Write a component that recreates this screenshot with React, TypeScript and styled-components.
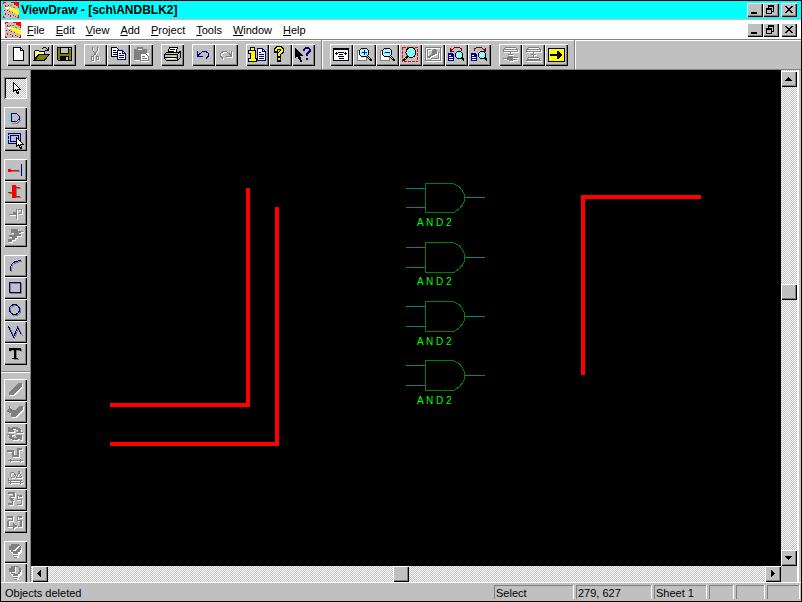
import React from "react";
import styled, { createGlobalStyle } from "styled-components";

const SILVER = "#c0c0c0";
const GRAY = "#808080";
const NAVY = "#000080";
const RED = "#ff0000";

const GlobalStyle = createGlobalStyle`
  * { box-sizing: border-box; }
  body { margin: 0; background: #000; overflow: hidden; }
  button { font: inherit; color: inherit; }
`;

const Window = styled.div`
  display: flex;
  flex-direction: column;
  height: 100vh;
  border: 1px solid #000;
  background: ${SILVER};
  color: #000;
  font: 11px/14px "Liberation Sans", Arial, sans-serif;
`;

const Bar = styled.header<{ $title?: boolean }>`
  display: flex;
  align-items: center;
  flex: none;
  height: 19px;
  padding: 0 4px 0 ${(p) => (p.$title ? 2 : 4)}px;
  background: ${(p) => (p.$title ? "#00ffff" : "#ffffff")};
  border-bottom: ${(p) => (p.$title ? `1px solid ${SILVER}` : "0")};
`;

const Title = styled.h1`
  flex: 1;
  margin: 0 0 0 2px;
  font-size: 12px;
  line-height: 16px;
  font-weight: bold;
  white-space: pre;
`;

const Menu = styled.nav`
  display: flex;
  flex: 1;
  gap: 11px;
  padding-left: 6px;
`;

const MenuItem = styled.button`
  padding: 0;
  border: 0;
  background: none;
  line-height: 16px;
`;

const WindowButtons = styled.div`
  display: flex;
`;

const Bevel = styled.button<{ $pressed?: boolean }>`
  display: block;
  flex: none;
  padding: 0;
  border: 0;
  background: ${(p) =>
    p.$pressed ? `repeating-conic-gradient(#fff 0 25%, ${SILVER} 0 50%) 0 0 / 2px 2px` : SILVER};
  box-shadow: ${(p) =>
    p.$pressed
      ? `inset 1px 1px ${GRAY}, inset -1px -1px #fff, inset 2px 2px #000`
      : `inset 1px 1px #fff, inset -1px -1px #000, inset -2px -2px ${GRAY}`};
  & > svg { display: block; }
`;

const WinButton = styled(Bevel)`
  width: 16px;
  height: 14px;
  &:last-child { margin-left: 2px; }
`;

const ToolButton = styled(Bevel)`
  width: 23px;
  height: 22px;
`;

const Toolbars = styled.div`
  display: flex;
  flex: none;
  height: 31px;
  border-top: 1px solid ${GRAY};
  border-bottom: 1px solid ${GRAY};
  box-shadow: inset 0 1px #fff;
`;

const Toolbar = styled.div`
  display: flex;
  gap: 8px;
  padding: 4px 6px 0;
  border-right: 1px solid ${GRAY};
  box-shadow: 1px 0 #fff;
  & + & { padding-left: 8px; }
`;

const Group = styled.div<{ $column?: boolean }>`
  display: flex;
  flex: none;
  flex-direction: ${(p) => (p.$column ? "column" : "row")};
`;

const Workspace = styled.main`
  display: flex;
  flex: 1;
  min-height: 0;
`;

const Sidebar = styled.aside`
  display: flex;
  flex-direction: column;
  flex: none;
  gap: 8px;
  width: 30px;
  padding: 7px 3px 0;
  border-right: 1px solid ${GRAY};
  overflow: hidden;
`;

const Divider = styled.hr`
  flex: none;
  width: 29px;
  height: 2px;
  margin: -2px -3px -2px;
  border: 0;
  border-top: 1px solid ${GRAY};
  border-bottom: 1px solid #fff;
`;

const Document = styled.section`
  display: grid;
  flex: 1;
  min-width: 0;
  grid-template: minmax(0, 1fr) 16px / minmax(0, 1fr) 16px;
  margin-right: 2px;
  border-right: 2px solid #fff;
`;

const Sheet = styled.svg`
  display: block;
  width: 100%;
  height: 100%;
  background: #000;
`;

const ScrollBar = styled.div<{ $vertical?: boolean }>`
  display: flex;
  flex-direction: ${(p) => (p.$vertical ? "column" : "row")};
  padding: ${(p) => (p.$vertical ? "1px 0 0" : "0 0 0 1px")};
  background: repeating-conic-gradient(#fff 0 25%, ${SILVER} 0 50%) 0 0 / 2px 2px;
`;

const ScrollButton = styled(Bevel)`
  width: 16px;
  height: 16px;
`;

const Track = styled.div<{ $part: number }>`
  flex: ${(p) => p.$part} 1 0;
`;

const StatusBar = styled.footer`
  display: flex;
  align-items: center;
  flex: none;
  gap: 3px;
  height: 19px;
  padding: 0 2px 0 4px;
  border-top: 1px solid #fff;
`;

const Message = styled.span`
  flex: 1;
  padding-top: 2px;
`;

const Pane = styled.span<{ $width: number }>`
  width: ${(p) => p.$width}px;
  height: 14px;
  padding-left: 1px;
  border: solid ${GRAY};
  border-width: 1px 0 0 1px;
  box-shadow: 1px 0 #fff;
`;

const Glyph = ({ w = 23, h = 22, children }: { w?: number; h?: number; children: React.ReactNode }) => (
  <svg width={w} height={h} viewBox={`0 0 ${w} ${h}`} fill="none" stroke="#000" shapeRendering="crispEdges" aria-hidden="true">
    {children}
  </svg>
);

/* Embossed look of an unavailable command: a white copy one pixel below a gray one. */
const Disabled = ({ d, solid = "" }: { d: string; solid?: string }) => (
  <Glyph>
    <g transform="translate(1 1)">
      <path d={d} stroke="#fff" />
      <path d={solid} fill="#fff" stroke="none" />
    </g>
    <path d={d} stroke={GRAY} />
    <path d={solid} fill={GRAY} stroke="none" />
  </Glyph>
);

const Logo = () => (
  <Glyph w={16} h={16}>
    <path d="M0 0H16V16H0Z" fill={SILVER} stroke="none" />
    <path d="M8 0H16V6H15V4H13V3H11V1H8ZM0 0H3V1H1V2H0ZM2 3H3V5H2ZM5 3H6V4H5ZM1 8H2V9H1ZM4 8H5V9H4ZM2 11H3V13H2ZM5 12H6V13H5ZM0 14H1V15H2V16H0ZM7 13H8V15H7ZM10 13H11V14H10ZM12 14H13V15H12ZM15 13H16V16H14V15H15ZM9 10H10V11H9ZM6 9H7V10H6Z" fill={RED} stroke="none" />
    <path d="M6 5H8V6H11V7H14V8H16V12H13V11H10V9H7V7H6Z" fill="#ffff00" stroke="none" />
    <path d="M2 5H6V7H3V6H2Z" fill="#fff" stroke="none" />
    <path d="M3 4.5H5M7 3.5H9M10 5.5H12" stroke={GRAY} />
  </Glyph>
);

const Lens = ({ sign }: { sign?: string }) => (
  <>
    <circle cx="11" cy="8.5" r="4.5" fill="#c0ffff" />
    <path d="M14.5 11.5L19 16.5M13.5 12.5L18 17" />
    <path d="M8.5 10V7.5M9 5.5H11M13.5 9V11" stroke="#00ffff" />
    {sign && <path d={sign} stroke="#0000ff" strokeWidth="1" />}
  </>
);

const Question = ({ x, color, outline }: { x: number; color: string; outline?: boolean }) => {
  const d = `M${x} 7V5.5L${x + 1.5} 4H${x + 4.5}L${x + 6} 5.5V7.5L${x + 3} 10V12M${x + 3} 14V16`;
  return (
    <>
      {outline && <path d={d} strokeWidth="4" strokeLinecap="square" />}
      <path d={d} stroke={color} strokeWidth="2" />
    </>
  );
};

const Pointer = ({ x, y, fill = "#fff" }: { x: number; y: number; fill?: string }) => (
  <path transform={`translate(${x} ${y})`} d="M.5 .5V9.5L2.5 7.5L4.5 11.5H5.5V10.5L4.5 7.5H7.5Z" fill={fill} />
);

const Swoop = () => (
  <>
    <path d="M3 9H8V10H9V17H3Z" fill={NAVY} stroke="none" />
    <path d="M4 11.5H6M4 13.5H8M4 15.5H8" stroke="#fff" />
    <circle cx="14" cy="11" r="3.5" fill="#80ffff" />
    <path d="M16 13.5L19 17M17 13.5L19 15.5" />
    <path d="M12.5 12V10.5H14" stroke="#fff" />
  </>
);

const gates = [
  { y: 183, height: 29, label: 43 },
  { y: 242, height: 30, label: 43 },
  { y: 301, height: 30, label: 44 },
  { y: 360, height: 30, label: 44 },
];

const fileTools: [string, React.ReactNode][][] = [
  [
    ["New", <Glyph><path d="M6.5 3.5H13.5L16.5 6.5V16.5H6.5Z" fill="#fff" /><path d="M13.5 3.5V6.5H16.5" /></Glyph>],
    ["Open", <Glyph>
      <path d="M4.5 15.5V7.5L5.5 6.5H8.5L9.5 7.5H14.5V10.5H8.5L4.5 15.5" fill="#ffff80" />
      <path d="M4.5 16L9.5 10.5H19.5L14.5 16Z" fill="#808000" />
      <path d="M12 4.5L13.5 3.5H15.5L18 6M18.5 3V6.5H15" />
    </Glyph>],
    ["Save", <Glyph>
      <path d="M4.5 3.5H18.5V16.5H5.5L4.5 15.5Z" fill="#808000" />
      <path d="M7.5 3.5H15.5V9.5H7.5Z" fill={SILVER} />
      <path d="M7 12H16V16H7Z" fill="#000" stroke="none" />
      <path d="M13 13H15V16H13ZM16 4H18V5H16Z" fill={SILVER} stroke="none" />
    </Glyph>],
  ],
  [
    ["Cut", <Disabled d="M8.5 3V6L12.5 12M13.5 3V6L9.5 12M7.5 12.5H9.5V16.5H7.5ZM12.5 12.5H14.5V15.5H12.5Z" />],
    ["Copy", <Glyph>
      <path d="M4.5 3.5H9.5L12.5 6.5V12.5H4.5Z" fill="#fff" />
      <path d="M6 6.5H9M6 8.5H10M6 10.5H10" />
      <path d="M10.5 6.5H15.5L18.5 9.5V15.5H10.5Z" fill="#fff" stroke={NAVY} />
      <path d="M15.5 7V9.5H18M12 9.5H14M12 11.5H17M12 13.5H17" stroke={NAVY} />
    </Glyph>],
    ["Paste", <Glyph>
      <path d="M5 5H8V3H13V5H17V9H19V18H11V17H5Z" fill="#fff" stroke="none" />
      <path d="M4 5H7V3H13V5H17V9H11V16H4Z" fill={GRAY} stroke="none" />
      <path d="M8 5.5H12" stroke="#fff" />
      <path d="M10.5 9.5H15.5L18.5 12.5V16.5H10.5ZM12 12.5H15M12 14.5H17" stroke={GRAY} />
    </Glyph>],
  ],
  [
    ["Print", <Glyph>
      <path d="M6.5 9.5L8.5 3.5H16.5L14.5 9.5" fill="#fff" />
      <path d="M9 5.5H14M8 7.5H13" />
      <path d="M3.5 10.5L5.5 8.5H17.5L19.5 7.5V13.5L16.5 16.5H5.5L3.5 14.5Z" fill={SILVER} />
      <path d="M4 10.5H16.5V16M4 13.5H16M17 10L19 8" />
      <path d="M6 14.5H14" stroke="#fff" /><path d="M11 12H14" stroke="#ffff00" />
    </Glyph>],
  ],
  [
    ["Undo", <Glyph><path d="M5.5 7V12.5H11M6 11.5L10.5 7.5H14L16.5 9.5V12L14 14.5M6 10.5H8" stroke={NAVY} /></Glyph>],
    ["Redo", <Disabled d="M16.5 7V12.5H11M16 11.5L11.5 7.5H8L5.5 9.5V12L8 14.5M16 10.5H14" />],
  ],
  [
    ["Information", <Glyph>
      <path d="M4.5 3.5H8.5V6.5H9.5V14.5H10.5V17.5H2.5V14.5H4.5V9.5H2.5V6.5H4.5Z" fill="#ffff00" />
      <path d="M4 6.5H9" />
      <path d="M11.5 4.5H16.5L19.5 7.5V16.5H11.5Z" fill="#fff" stroke={NAVY} />
      <path d="M16.5 5V7.5H19M13 8.5H15M13 10.5H18M13 12.5H18M13 14.5H18" stroke={NAVY} />
    </Glyph>],
    ["Help topics", <Glyph><Question x={7} color="#ffff00" outline /></Glyph>],
    ["What is this", <Glyph><Pointer x={3} y={4} fill="#000" /><path d="M7 13L9.5 18" strokeWidth="2" /><Question x={12} color={NAVY} /></Glyph>],
  ],
];

const viewTools: [string, React.ReactNode][][] = [
  [
    ["Full view", <Glyph>
      <path d="M3.5 4.5H18.5V16.5H3.5Z" fill="#fff" />
      <path d="M4 5.5H18M8 8.5H14M9 10.5H13M8 12.5H14M9 14.5H14" />
      <path d="M5 9.5H8M6.5 8V11M14 9.5H17M15.5 8V11" stroke={NAVY} />
    </Glyph>],
    ["Zoom in", <Glyph><path d="M4.5 6.5H13.5V16.5H4.5Z" fill="#fff" stroke={GRAY} /><Lens sign="M8.5 8.5H13.5M11.5 6V11" /></Glyph>],
    ["Zoom out", <Glyph><path d="M4.5 6.5H13.5V16.5H4.5Z" fill="#fff" stroke={GRAY} /><Lens sign="M8.5 8.5H14" /></Glyph>],
    ["Zoom region", <Glyph>
      <path d="M3.5 3.5H18.5V17.5H3.5Z" stroke={RED} strokeDasharray="3 1" />
      <circle cx="12" cy="8.5" r="5" fill="#80ffff" />
      <path d="M8.5 11.5L4 16.5M9 12.5L5 17" />
      <path d="M9 9L12 6M12 12L15 9" stroke={SILVER} />
    </Glyph>],
    ["Zoom selected", <Disabled d="M3.5 3.5H18.5V16.5H3.5ZM5.5 14V5.5H9M16.5 8V14.5H9" solid="M11 5H14V6H15V10H13V11H11V12H9V13H8V14H6V12H8V11H9V10H10V6H11Z" />],
    ["Previous view", <Glyph><path d="M6.5 6L9 4L11 3.5H14L16.5 5V7M5.5 4V8M6.5 5V8M6 7.5H9" stroke="#800000" /><Swoop /></Glyph>],
    ["Next view", <Glyph><path d="M6.5 7V5L9 3.5H13L16.5 6V7M17.5 4V8M16.5 5V8M14 7.5H18" stroke="#800000" /><Swoop /></Glyph>],
  ],
  [
    ["Push", <Disabled d="M4 6.5L6.5 3.5H16.5L19 6.5M5 5.5H18M4 7.5H19M11.5 8V11M9 10.5H14M4 14.5H8M14 13.5H19M14 15.5H18" solid="M9 12H14V17H10V16H8V13H9Z" />],
    ["Pop", <Disabled d="M4 6.5L6.5 3.5H16.5L19 6.5M5 5.5H18M4 7.5H19M11.5 8V13M9 10.5H14M4.5 16.5L6.5 13.5H16.5L18.5 16.5ZM6 15.5H17" />],
    ["Go", <Glyph><path d="M3.5 4.5H19.5V17.5H3.5Z" fill="#ffff00" /><path d="M5 10H12V7H14V8H15V9H16V10H17V12H16V13H15V14H14V15H12V12H5Z" fill="#000" stroke="none" /></Glyph>],
  ],
];

const sideTools: [string, React.ReactNode][][] = [
  [["Select", <Glyph><Pointer x={9} y={5} /></Glyph>]],
  [
    ["Gate", <Glyph>
      <path d="M8 16.5H13L16.5 13" stroke={GRAY} />
      <path d="M7.5 6.5H12.5L15.5 9.5V12L12.5 14.5H7.5Z" stroke={NAVY} />
      <path d="M4 8.5H7M4 13.5H7M16 11.5H18" stroke="#00ffff" strokeWidth="1" />
    </Glyph>],
    ["Component", <Glyph>
      <path d="M4.5 4.5H16.5V14.5H4.5ZM6.5 6.5H14.5V12.5H6.5Z" stroke={NAVY} />
      <path d="M3 6.5H5M3 10.5H5" stroke="#00ffff" /><Pointer x={12} y={8} />
    </Glyph>],
  ],
  [
    ["Net", <Glyph><path d="M5 12.5H16" stroke={GRAY} /><path d="M6 11.5H16" stroke={RED} /><path d="M4 10H7V13H4Z" fill={RED} stroke="none" /><path d="M15 11.5H17" stroke="#00ffff" /><path d="M17.5 5V17" stroke={NAVY} /></Glyph>],
    ["Bus", <Glyph><path d="M5 12.5H8M12 7.5H17M12 16.5H17M12.5 5V17" stroke={GRAY} /><path d="M4 11.5H8M12 6.5H16M12 15.5H16" stroke={RED} /><path d="M8 4H12V17H8Z" fill={RED} stroke="none" /></Glyph>],
    ["Label", <Disabled d="M5 11.5H11M12.5 6V16M14 6.5H17.5V10.5H14M9 9L11 11" solid="M9 9H12V12H9Z" />],
    ["Array", <Disabled d="M8 4.5H14M16 6.5H19" solid="M7 4H14V6H17V8H15V9H17V11H13V13H11V15H8V17H4V14H8V12H5V10H10V8H7Z" />],
  ],
  [
    ["Arc", <Glyph><path d="M7.5 17V13L9 10L12 7.5L18 6.5" stroke={GRAY} /><path d="M6.5 16V12L8 9L11 6.5L17 5.5" stroke={NAVY} /></Glyph>],
    ["Rectangle", <Glyph><path d="M6.5 6.5H17.5V16.5H6.5Z" stroke={GRAY} /><path d="M5.5 5.5H16.5V15.5H5.5Z" stroke={NAVY} /></Glyph>],
    ["Circle", <Glyph><circle cx="11.5" cy="11.5" r="5" stroke={GRAY} /><circle cx="10.5" cy="10.5" r="5" stroke={NAVY} /></Glyph>],
    ["Polyline", <Glyph><path d="M5.5 6L10.5 17L14.5 7.5L18.5 15" stroke={GRAY} /><path d="M4.5 5.5L9.5 16L13.5 6.5L17.5 13.5" stroke={NAVY} /></Glyph>],
    ["Text", <Glyph><path d="M6 6H18V9H17V8H13V16H15V17H10V16H11V8H7V9H6Z" fill={GRAY} stroke="none" /><path d="M5 5H17V8H16L15 7H12V15H14V16H8V15H10V7H7L6 8H5Z" fill="#000" stroke="none" /></Glyph>],
  ],
];

const editTools: [string, React.ReactNode][][] = [
  [
    ["Line style", <Disabled d="" solid="M5 13L14 4H18V7L9 16H5Z" />],
    ["Fill style", <Disabled d="" solid="M3 9L5 7V4L8 9H11L16 5H19V8L11 16H7V12L3 11Z" />],
    ["Rotate", <Disabled d="" solid="M4 4H6V5H8V4H14V5H16V6H17V9H19V10H12V9H14V7H12V6H9V7H10V9H4ZM3 11H10V12H8V14H10V15H13V14H12V12H18V17H16V16H14V17H8V16H6V15H5V12H3Z" />],
    ["Stretch", <Disabled d="M3 5.5H9.5V10.5H13.5V3.5H18M3 6.5H8.5V11.5H14.5V4.5H18M4 15.5H19M6.5 14V17M16.5 14V17" />],
    ["Scale", <Disabled d="M6 7.5L7.5 5.5H9.5L11 7.5V9L9.5 10.5H7.5L6 9ZM12.5 10.5L15 4.5L17.5 10.5ZM4.5 11V13.5H18M4 15.5H19M6.5 14V17M16.5 14V17" />],
    ["Reflect", <Disabled d="M4 3.5H10.5V7.5H6.5V10M4 4.5H9.5V6.5M18 6.5H13.5V10.5H17.5V15.5H13M18 7.5H14.5M4 15.5H8.5V11.5H10M4 14.5H7.5" solid="M4 9H10L7 12Z" />],
    ["Mirror", <Disabled d="M3 5.5H8.5V9.5H4.5V15.5H9M3 6.5H7.5M18 5.5H13.5V9.5H17.5V15.5H14M18 6.5H14.5M3.5 10V16M16.5 10V15" solid="M9 12L14 15L9 18Z" />],
  ],
  [
    ["Highlight", <Glyph>
      <path d="M8 5H15L18 8V11L15 14V17H11L9 14L6 11V7Z" fill="#fff" stroke="none" />
      <path d="M7 3H15V4H16V5H17V9H16V11H14V13H9V11H7V9H5V5H7Z" fill={GRAY} stroke="none" />
      <path d="M9 14.5H14M10 16.5H13" stroke={GRAY} />
      <path d="M9 9.5H11L15.5 5" stroke="#fff" />
    </Glyph>],
    ["Unhighlight", <Glyph>
      <path d="M8 5H15L18 8V11L15 14V17H11L9 14L6 11V7Z" fill="#fff" stroke="none" />
      <path d="M7 3H15V4H16V5H17V9H16V11H14V13H9V11H7V9H5V5H7Z" fill={GRAY} stroke="none" />
      <path d="M11 4H15V9H14V11H11Z" fill={SILVER} stroke="none" />
      <path d="M11.5 4V9.5H8" stroke="#fff" />
      <path d="M9 14.5H14M10 16.5H13" stroke={GRAY} />
    </Glyph>],
  ],
];

const Tools = ({ groups, column }: { groups: [string, React.ReactNode][][]; column?: boolean }) => (
  <>
    {groups.map((group) => (
      <Group key={group[0][0]} $column={column}>
        {group.map(([label, icon]) => (
          <ToolButton key={label} type="button" aria-label={label} title={label} $pressed={label === "Select"}>
            {icon}
          </ToolButton>
        ))}
      </Group>
    ))}
  </>
);

const WindowControls = ({ target }: { target: string }) => (
  <WindowButtons>
    <WinButton type="button" aria-label={`Minimize ${target}`}><Glyph w={16} h={14}><path d="M4 10H10" strokeWidth="2" /></Glyph></WinButton>
    <WinButton type="button" aria-label={`Restore ${target}`}>
      <Glyph w={16} h={14}><path d="M5 2.5H11M5.5 3V5M10.5 3V8.5H9M5 3.5H11M3 5.5H9M3.5 6V10.5H8.5V6M3 6.5H9" /></Glyph>
    </WinButton>
    <WinButton type="button" aria-label={`Close ${target}`}>
      <Glyph w={16} h={14}><path d="M4 3H6V4H7V5H9V4H10V3H12V4H11V5H10V6H9V7H10V8H11V9H12V10H10V9H9V8H7V9H6V10H4V9H5V8H6V7H7V6H6V5H5V4H4Z" fill="#000" stroke="none" /></Glyph>
    </WinButton>
  </WindowButtons>
);

const arrows: Record<string, string> = {
  up: "M7 6H8V7H9V8H10V9H11V10H4V9H5V8H6V7H7Z",
  down: "M4 6H11V7H10V8H9V9H8V10H7V9H6V8H5V7H4Z",
  left: "M9 4V11H8V10H7V9H6V8H5V7H6V6H7V5H8V4Z",
  right: "M6 4V11H7V10H8V9H9V8H10V7H9V6H8V5H7V4Z",
};

const Arrow = ({ to }: { to: string }) => (
  <ScrollButton type="button" aria-label={`Scroll ${to}`}>
    <Glyph w={16} h={16}><path d={arrows[to]} fill="#000" stroke="none" /></Glyph>
  </ScrollButton>
);

const menus = ["File", "Edit", "View", "Add", "Project", "Tools", "Window", "Help"];

export default function App() {
  return (
    <Window>
      <GlobalStyle />
      <Bar $title>
        <Logo />
        <Title>{"ViewDraw - [sch\\ANDBLK2]"}</Title>
        <WindowControls target="application" />
      </Bar>
      <Bar>
        <Logo />
        <Menu>
          {menus.map((name) => (
            <MenuItem key={name} type="button"><u>{name[0]}</u>{name.slice(1)}</MenuItem>
          ))}
        </Menu>
        <WindowControls target="document" />
      </Bar>
      <Toolbars>
        <Toolbar><Tools groups={fileTools} /></Toolbar>
        <Toolbar><Tools groups={viewTools} /></Toolbar>
      </Toolbars>
      <Workspace>
        <Sidebar>
          <Tools groups={sideTools} column />
          <Divider />
          <Tools groups={editTools} column />
        </Sidebar>
        <Document>
          <Sheet shapeRendering="crispEdges" fill="none" role="img" aria-label="Schematic sheet">
            <path d="M217 118V335H79M246 137V374H79M552 305V127H670" stroke={RED} strokeWidth="4" />
            {gates.map(({ y, height: h, label }) => (
              <g key={y} transform={`translate(375 ${y - 70})`}>
                <path d={`M0 5.5H19M0 ${h - 4.5}H19M59 ${h - 14.5}H79`} stroke="#008080" />
                <path d={`M19.5 .5H47L53 3.5L56.5 7.5L58.5 12V${h - 11}L56.5 ${h - 7}L53 ${h - 3}L48 ${h + 0.5}H19.5Z`} stroke="#008000" />
                <text x="11" y={label} fill="#00ff00" fontSize="10">A N D 2</text>
              </g>
            ))}
          </Sheet>
          <ScrollBar $vertical>
            <Arrow to="up" />
            <Track $part={197} />
            <ScrollButton type="button" aria-label="Vertical position" />
            <Track $part={250} />
            <Arrow to="down" />
          </ScrollBar>
          <ScrollBar>
            <Arrow to="left" />
            <Track $part={345} />
            <ScrollButton type="button" aria-label="Horizontal position" />
            <Track $part={356} />
            <Arrow to="right" />
          </ScrollBar>
        </Document>
      </Workspace>
      <StatusBar>
        <Message>Objects deleted</Message>
        <Pane $width={79}>Select</Pane>
        <Pane $width={75}>279, 627</Pane>
        <Pane $width={52}>Sheet 1</Pane>
        <Pane $width={24} />
        <Pane $width={28} />
        <Pane $width={32} />
      </StatusBar>
    </Window>
  );
}
